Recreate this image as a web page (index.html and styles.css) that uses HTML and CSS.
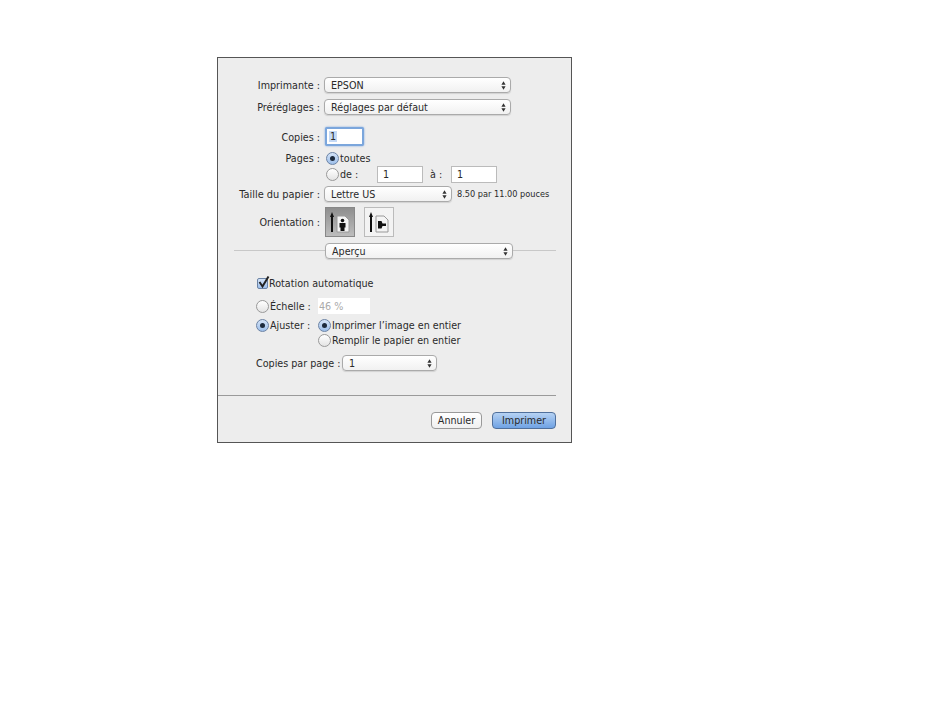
FILE: index.html
```html
<!DOCTYPE html>
<html lang="fr">
<head>
    <meta charset="UTF-8">
    <title>Imprimer</title>
    <link rel="stylesheet" href="styles.css">
</head>
<body>
    <svg class="defs" width="0" height="0">
        <symbol id="updown" viewBox="0 0 6 10">
            <path d="M3 0L5.500 4H.5zM3 10L.5 6h5z" fill="#333"/>
        </symbol>
    </svg>

    <div class="dialog">
        <!-- Printer -->
        <div class="row h16">
            <span class="label">Imprimante :</span>
            <div class="select wide"><span>EPSON</span><svg class="updown"><use href="#updown"/></svg></div>
        </div>
        <div class="row h16 mt6">
            <span class="label">Préréglages :</span>
            <div class="select wide"><span>Réglages par défaut</span><svg class="updown"><use href="#updown"/></svg></div>
        </div>

        <!-- Copies and pages -->
        <div class="row h20 mt11">
            <span class="label copies-label">Copies :</span>
            <div class="copies"><span class="selected">1</span></div>
        </div>
        <div class="row h14 mt5">
            <span class="label">Pages :</span>
            <span class="radio on first"></span>
            <span class="opt">toutes</span>
        </div>
        <div class="row h18">
            <span class="label"></span>
            <span class="radio first"></span>
            <span class="opt de">de :</span>
            <div class="field">1</div>
            <span class="opt to">à :</span>
            <div class="field">1</div>
        </div>

        <!-- Paper -->
        <div class="row h16 mt3">
            <span class="label paper-label">Taille du papier :</span>
            <div class="select paper"><span>Lettre US</span><svg class="updown"><use href="#updown"/></svg></div>
            <span class="size">8.50 par 11.00 pouces</span>
        </div>
        <div class="row h30 mt5">
            <span class="label">Orientation :</span>
            <div class="orient active">
                <svg width="28" height="28" viewBox="0 0 28 28">
                    <path d="M6 4L8 9H7v15H5V9H4z" fill="#111"/>
                    <path d="M11 8h8l4 4v12H11z" fill="#f4f4f4" stroke="#999"/>
                    <circle cx="16.500" cy="12.500" r="1.800" fill="#111"/>
                    <path d="M13.500 15h6v4.500h-1V23h-4v-3.500h-1z" fill="#111"/>
                </svg>
            </div>
            <div class="orient">
                <svg width="28" height="28" viewBox="0 0 28 28">
                    <path d="M6 4L8 9H7v15H5V9H4z" fill="#111"/>
                    <path d="M11 8h8l4 4v12H11z" fill="#f4f4f4" stroke="#999"/>
                    <path d="M13 13h3.500l1 2.500H21v2.500h-3.500l-1 2.500H13z" fill="#111"/>
                </svg>
            </div>
        </div>

        <!-- Panel menu -->
        <div class="row h16 mt6 panel">
            <div class="rule left"></div>
            <div class="select menu"><span>Aperçu</span><svg class="updown"><use href="#updown"/></svg></div>
            <div class="rule"></div>
        </div>

        <!-- Preview options -->
        <div class="row h14 mt17 indent">
            <span class="check">
                <svg width="13" height="13" viewBox="0 0 13 13"><path d="M2.500 6L5.500 10.500L11.500 .5" fill="none" stroke="#222" stroke-width="2"/></svg>
            </span>
            <span class="opt">Rotation automatique</span>
        </div>
        <div class="row h16 mt8 indent">
            <span class="radio"></span>
            <span class="opt scale-label">Échelle :</span>
            <div class="scale">46 %</div>
        </div>
        <div class="row h14 mt4 indent">
            <span class="radio on"></span>
            <span class="opt fit-label">Ajuster :</span>
            <span class="radio on"></span>
            <span class="opt">Imprimer l’image en entier</span>
        </div>
        <div class="row h14 mt1 indent">
            <span class="fit-gap"></span>
            <span class="radio"></span>
            <span class="opt">Remplir le papier en entier</span>
        </div>
        <div class="row h16 mt8 indent">
            <span class="opt per-page">Copies par page :</span>
            <div class="select small"><span>1</span><svg class="updown"><use href="#updown"/></svg></div>
        </div>

        <div class="footer-line"></div>

        <div class="buttons">
            <div class="btn">Annuler</div>
            <div class="btn primary">Imprimer</div>
        </div>
    </div>
</body>
</html>
```

FILE: styles.css
```css
/* Base */
body {
    margin: 0;
    padding: 57px 0 0 217px;
    background: #fff;
    font-family: "DejaVu Sans", sans-serif;
    font-size: 9.6px;
    color: #2a2a2a;
}

.defs {
    position: absolute;
}

.dialog {
    box-sizing: border-box;
    width: 355px;
    height: 386px;
    padding-top: 19px;
    background: #ededed;
    border: 1px solid #555;
}

/* Rows */
.row {
    display: flex;
    align-items: center;
}

.h14 { height: 14px; }
.h16 { height: 16px; }
.h18 { height: 18px; }
.h20 { height: 20px; }
.h30 { height: 30px; }

.mt1 { margin-top: 1px; }
.mt3 { margin-top: 3px; }
.mt4 { margin-top: 4px; }
.mt5 { margin-top: 5px; }
.mt6 { margin-top: 6px; }
.mt8 { margin-top: 8px; }
.mt11 { margin-top: 11px; }
.mt17 { margin-top: 17px; }

.label {
    flex: none;
    width: 102px;
    margin-right: 4px;
    text-align: right;
    white-space: nowrap;
}

.copies-label {
    margin-top: 2px;
}

.paper-label {
    font-size: 9.8px;
}

.indent {
    padding-left: 38px;
}

/* Popup menus */
.select {
    box-sizing: border-box;
    flex: none;
    display: flex;
    align-items: center;
    justify-content: space-between;
    height: 16px;
    padding: 0 4px 0 6px;
    background: linear-gradient(#fff, #f1f1f1);
    border: 1px solid #aaa;
    border-radius: 4px;
    box-shadow: 0 1px 1px rgba(0, 0, 0, 0.12);
}

.wide { width: 187px; }
.paper { width: 128px; }
.menu { width: 188px; }
.small { width: 95px; margin-left: 3px; }

.updown {
    width: 5px;
    height: 9px;
}

.size {
    margin-left: 5px;
    font-size: 8.2px;
    white-space: nowrap;
}

/* Text fields */
.copies {
    box-sizing: border-box;
    width: 39px;
    height: 19px;
    margin: 1px 0 0 1px;
    padding: 2px 0 0 2px;
    background: #fff;
    border: 2px solid #7ba6dc;
    border-radius: 2px;
    box-shadow: 0 0 2px #6f9fe0;
}

.selected {
    padding: 0 1px;
    background: #c4d9f5;
}

.field {
    box-sizing: border-box;
    width: 46px;
    height: 17px;
    padding: 2px 0 0 5px;
    background: #fff;
    border: 1px solid #bbb;
}

.scale {
    box-sizing: border-box;
    width: 52px;
    height: 16px;
    padding: 3px 0 0 1px;
    background: #fff;
    color: #aaa;
}

/* Radios and checkbox */
.radio {
    flex: none;
    box-sizing: border-box;
    display: flex;
    align-items: center;
    justify-content: center;
    width: 13px;
    height: 13px;
    background: linear-gradient(#fff, #e4e4e4);
    border: 1px solid #999;
    border-radius: 50%;
}

.radio.first {
    margin-left: 2px;
}

.radio.on {
    background: linear-gradient(#d4e3f7, #9dbfea);
    border-color: #6b83a5;
}

.radio.on::after {
    content: "";
    width: 5px;
    height: 5px;
    background: #1c2a3c;
    border-radius: 50%;
}

.check {
    flex: none;
    box-sizing: border-box;
    width: 11px;
    height: 11px;
    margin-left: 1px;
    background: linear-gradient(#d4e3f7, #9dbfea);
    border: 1px solid #6b83a5;
    border-radius: 2px;
}

.check svg {
    display: block;
    margin: -3px 0 0 -1px;
}

.opt {
    margin-left: 1px;
    white-space: nowrap;
}

.de { width: 37px; }
.to { width: 21px; margin-left: 7px; }
.scale-label { width: 48px; }
.fit-label { width: 48px; }
.fit-gap { width: 62px; flex: none; }
.per-page { width: 83px; margin-left: 0; }

/* Orientation */
.orient {
    box-sizing: border-box;
    display: flex;
    align-items: center;
    justify-content: center;
    width: 30px;
    height: 30px;
    margin-left: 1px;
    background: #f3f3f3;
    border: 1px solid #bbb;
}

.orient.active {
    margin-right: 8px;
    background: linear-gradient(#8e8e8e, #bdbdbd);
    border-color: #888;
}

/* Divider with the panel menu */
.panel {
    padding: 0 15px 0 16px;
}

.rule {
    flex: 1;
    height: 1px;
    margin-bottom: 2px;
    background: #c8c8c8;
}

.rule.left {
    flex: none;
    width: 91px;
}

.footer-line {
    height: 1px;
    margin: 24px 15px 0 0;
    background: #9a9a9a;
}

/* Buttons */
.buttons {
    display: flex;
    justify-content: flex-end;
    gap: 10px;
    margin: 16px 15px 0 0;
}

.btn {
    box-sizing: border-box;
    width: 51px;
    height: 17px;
    line-height: 15px;
    text-align: center;
    background: linear-gradient(#fff, #f0f0f0);
    border: 1px solid #999;
    border-radius: 4px;
}

.btn.primary {
    width: 64px;
    background: linear-gradient(#b6d2f3, #6fa2e4);
    border-color: #50709c;
}
```
